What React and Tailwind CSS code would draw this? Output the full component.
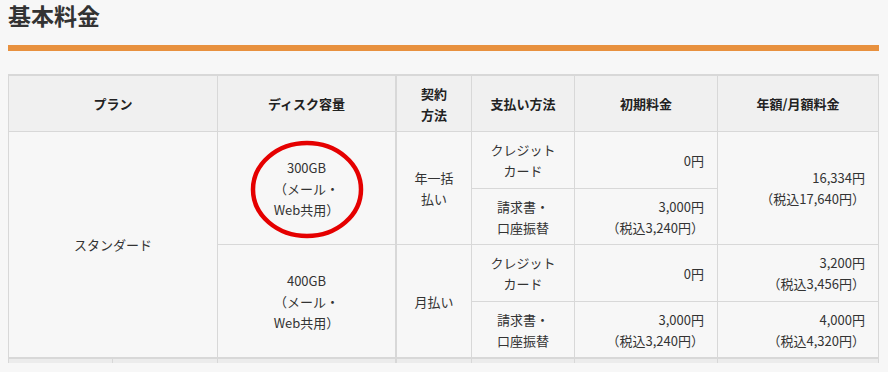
import React from "react";

const B = "border-[#d8d8d8]";
const cell = `border-l border-t ${B} flex flex-col justify-center text-[13px] leading-[21px] text-[#333]`;
const center = `${cell} items-center text-center`;
const right = `${cell} items-end text-right pr-[13px]`;
const head = `border-l border-t-2 ${B} bg-[#f0f0f0] flex flex-col items-center justify-center text-center text-[13px] leading-[21px] font-bold text-[#222]`;

export default function App() {
  return (
    <div className="relative w-[888px] h-[372px] bg-[#f7f7f7] font-['Noto_Sans_CJK_JP','Noto_Sans',sans-serif] overflow-hidden">
      <div className="px-[8px]">
        <h1 className="pt-[1px] pb-[1px] leading-[28px] text-[23px] font-bold text-[#333]">基本料金</h1>
        <div className="mt-[15px] h-[6px] w-[871px] bg-[#e8913f]" />
        <div
          className={`mt-[23px] grid w-[871px] grid-cols-[209px_178px_76px_103px_143px_161px] grid-rows-[57px_57px_56px_57px_56px_6px] border-r ${B}`}
        >
          {/* header */}
          <div className={head}>プラン</div>
          <div className={head}>ディスク容量</div>
          <div className={`${head} border-l-2`}>
            <span>契約</span>
            <span>方法</span>
          </div>
          <div className={head}>支払い方法</div>
          <div className={head}>初期料金</div>
          <div className={head}>年額/月額料金</div>

          {/* plan */}
          <div className={`${center} row-span-4`}>スタンダード</div>

          {/* 300GB group */}
          <div className={`${center} row-span-2`}>
            <span>300GB</span>
            <span>（メール・</span>
            <span>Web共用）</span>
          </div>
          <div className={`${center} border-l-2 row-span-2`}>
            <span>年一括</span>
            <span>払い</span>
          </div>
          <div className={center}>
            <span>クレジット</span>
            <span>カード</span>
          </div>
          <div className={right}>0円</div>
          <div className={`${right} row-span-2`}>
            <span>16,334円</span>
            <span>（税込17,640円）</span>
          </div>
          <div className={center}>
            <span>請求書・</span>
            <span>口座振替</span>
          </div>
          <div className={right}>
            <span>3,000円</span>
            <span>（税込3,240円）</span>
          </div>

          {/* 400GB group */}
          <div className={`${center} row-span-2`}>
            <span>400GB</span>
            <span>（メール・</span>
            <span>Web共用）</span>
          </div>
          <div className={`${center} border-l-2 row-span-2`}>月払い</div>
          <div className={center}>
            <span>クレジット</span>
            <span>カード</span>
          </div>
          <div className={right}>0円</div>
          <div className={right}>
            <span>3,200円</span>
            <span>（税込3,456円）</span>
          </div>
          <div className={center}>
            <span>請求書・</span>
            <span>口座振替</span>
          </div>
          <div className={right}>
            <span>3,000円</span>
            <span>（税込3,240円）</span>
          </div>
          <div className={right}>
            <span>4,000円</span>
            <span>（税込4,320円）</span>
          </div>

          {/* partial next row */}
          <div className={`border-l border-t-2 ${B} bg-[#ececec] flex`}>
            <div className="w-[103px]" />
            <div className={`flex-1 border-l ${B}`} />
          </div>
          <div className={`border-l border-t-2 ${B} bg-[#ececec]`} />
          <div className={`border-l-2 border-t-2 ${B} bg-[#ececec]`} />
          <div className={`border-l border-t-2 ${B} bg-[#ececec]`} />
          <div className={`border-l border-t-2 ${B} bg-[#ececec]`} />
          <div className={`border-l border-t-2 ${B} bg-[#ececec]`} />
        </div>
      </div>

      {/* red annotation circle */}
      <svg
        className="absolute left-[250px] top-[140px]"
        width="114"
        height="99"
        viewBox="0 0 114 99"
      >
        <ellipse cx="57" cy="49.5" rx="54" ry="46.5" fill="none" stroke="#e50000" strokeWidth="4.5" />
      </svg>
    </div>
  );
}
